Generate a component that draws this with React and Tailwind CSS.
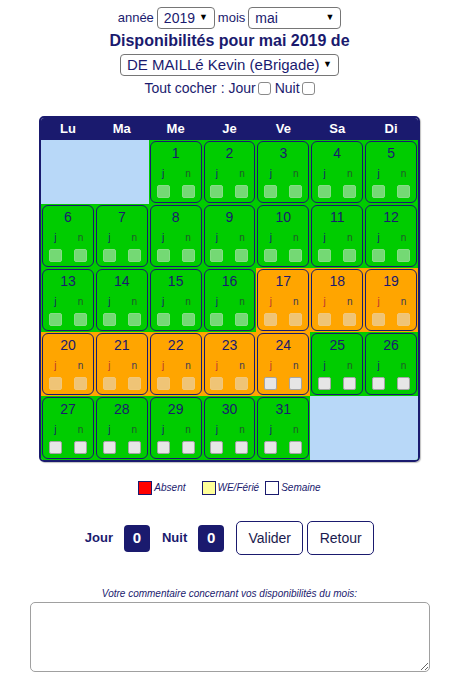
import React from "react";

const NAVY = "text-[#1a1a6e]";

// Faux native select box
const SelectBox = ({ value, className = "" }) => (
  <div
    className={`inline-flex h-[22px] items-center justify-between rounded-[4px] border border-[#767676] bg-white pl-[6px] pr-[6px] text-[14px] text-[#1a1a6e] ${className}`}
  >
    <span>{value}</span>
    <span className="text-[9px] text-black">▼</span>
  </div>
);

const TinyCheck = () => (
  <span className="inline-block h-[13px] w-[13px] rounded-[3px] border border-[#8a8a8a] bg-white align-middle" />
);

// Calendar data: status per day
const days = Array.from({ length: 31 }, (_, i) => {
  const d = i + 1;
  const orange = d >= 17 && d <= 24;
  const disabled = d <= 23;
  return { d, orange, disabled };
});

const Box = ({ disabled, orange }) => {
  if (!disabled)
    return (
      <span className="block h-[13px] w-[13px] rounded-[2px] border border-[#a5a5a5] bg-[#e6e6e6]" />
    );
  return (
    <span
      className={`block h-[13px] w-[13px] rounded-[2px] border ${
        orange
          ? "border-[#f2c77a] bg-[#efc476]"
          : "border-[#86dc86] bg-[#74d974]"
      }`}
    />
  );
};

const DayCell = ({ day }) => {
  if (!day) return <div className="h-[64px] bg-[#b8d8f8]" />;
  const bg = day.orange ? "bg-[#ffa500]" : "bg-[#00cc00]";
  return (
    <div className={`h-[64px] p-px ${bg}`}>
      <div className="flex h-full flex-col items-center rounded-[6px] border border-[#1a1a6e]">
        <span className={`mt-[2px] text-[14px] leading-[18px] ${NAVY}`}>
          {day.d}
        </span>
        <div className="mt-[6px] flex gap-[12px] text-[10px] leading-[12px]">
          <span
            className={`w-[13px] text-center ${
              day.orange ? "text-[#b83232]" : "text-[#1a1a6e]"
            }`}
          >
            j
          </span>
          <span
            className={`w-[13px] text-center ${
              day.orange ? "text-[#3b3b55]" : "text-[#1f5a2a]"
            }`}
          >
            n
          </span>
        </div>
        <div className="mt-[5px] flex gap-[12px]">
          <Box disabled={day.disabled} orange={day.orange} />
          <Box disabled={day.disabled} orange={day.orange} />
        </div>
      </div>
    </div>
  );
};

const App = () => {
  const cells = [null, null, ...days, null, null];
  const headers = ["Lu", "Ma", "Me", "Je", "Ve", "Sa", "Di"];

  return (
    <div
      className="min-h-screen bg-white text-center"
      style={{ fontFamily: '"Liberation Sans", Arial, sans-serif' }}
    >
      {/* Top controls */}
      <div className="flex flex-col items-center pt-[7px]">
        <div className={`flex items-center gap-[3px] text-[13px] ${NAVY}`}>
          <span>année</span>
          <SelectBox value="2019" className="w-[58px]" />
          <span>mois</span>
          <SelectBox value="mai" className="w-[93px]" />
        </div>
        <h1 className={`mt-[3px] text-[16px] font-bold leading-[18px] ${NAVY}`}>
          Disponibilités pour mai 2019 de
        </h1>
        <SelectBox
          value="DE MAILLé Kevin (eBrigade)"
          className="mt-[4px] w-[219px] text-[15px]"
        />
        <div
          className={`mt-[4px] flex items-center gap-[2px] text-[14px] leading-[16px] ${NAVY}`}
        >
          <span>Tout cocher : Jour</span>
          <TinyCheck />
          <span className="ml-[2px]">Nuit</span>
          <TinyCheck />
        </div>
      </div>

      {/* Calendar */}
      <div className="mx-auto mt-[20px] w-[381px] overflow-hidden rounded-[5px] border-2 border-[#1a1a6e] shadow-[1px_1px_1px_rgba(0,0,0,0.25)]">
        <div className="grid h-[22px] grid-cols-7 items-center bg-[#1a1a6e] text-[13px] font-bold text-white">
          {headers.map((h) => (
            <span key={h}>{h}</span>
          ))}
        </div>
        <div className="grid grid-cols-7 bg-[#00cc00]">
          {cells.map((c, i) => (
            <DayCell key={i} day={c} />
          ))}
        </div>
      </div>

      {/* Legend */}
      <div className="mt-[18px] flex items-center justify-center text-[10px] italic text-[#1a1a6e]">
        <span className="h-[14px] w-[14px] border border-[#1a1a6e] bg-[#ff0000]" />
        <span className="ml-[2px]">Absent</span>
        <span className="ml-[16px] h-[14px] w-[14px] border border-[#1a1a6e] bg-[#ffff99]" />
        <span className="ml-[2px]">WE/Férié</span>
        <span className="ml-[6px] h-[14px] w-[14px] border border-[#1a1a6e] bg-white" />
        <span className="ml-[2px]">Semaine</span>
      </div>

      {/* Counters + buttons */}
      <div className="mt-[26px] flex items-center justify-center">
        <span className={`text-[13px] font-bold ${NAVY}`}>Jour</span>
        <span className="ml-[11px] flex h-[27px] w-[26px] items-center justify-center rounded-[4px] bg-[#1a1a6e] text-[15px] font-bold text-white">
          0
        </span>
        <span className={`ml-[12px] text-[13px] font-bold ${NAVY}`}>Nuit</span>
        <span className="ml-[11px] flex h-[27px] w-[26px] items-center justify-center rounded-[4px] bg-[#1a1a6e] text-[15px] font-bold text-white">
          0
        </span>
        <button className="ml-[12px] h-[34px] w-[67px] rounded-[5px] border border-[#1a1a6e] bg-white text-[14px] text-[#1a1a4e]">
          Valider
        </button>
        <button className="ml-[4px] h-[34px] w-[67px] rounded-[5px] border border-[#1a1a6e] bg-white text-[14px] text-[#1a1a4e]">
          Retour
        </button>
      </div>

      {/* Comment */}
      <div className="mt-[33px] text-[10px] italic leading-[12px] text-[#1a1a6e]">
        Votre commentaire concernant vos disponibilités du mois:
      </div>
      <div className="mt-[2px] flex justify-center">
        <textarea className="h-[70px] w-[400px] resize rounded-[5px] border border-[#a0a0a0] bg-white" />
      </div>
    </div>
  );
};

export default App;
